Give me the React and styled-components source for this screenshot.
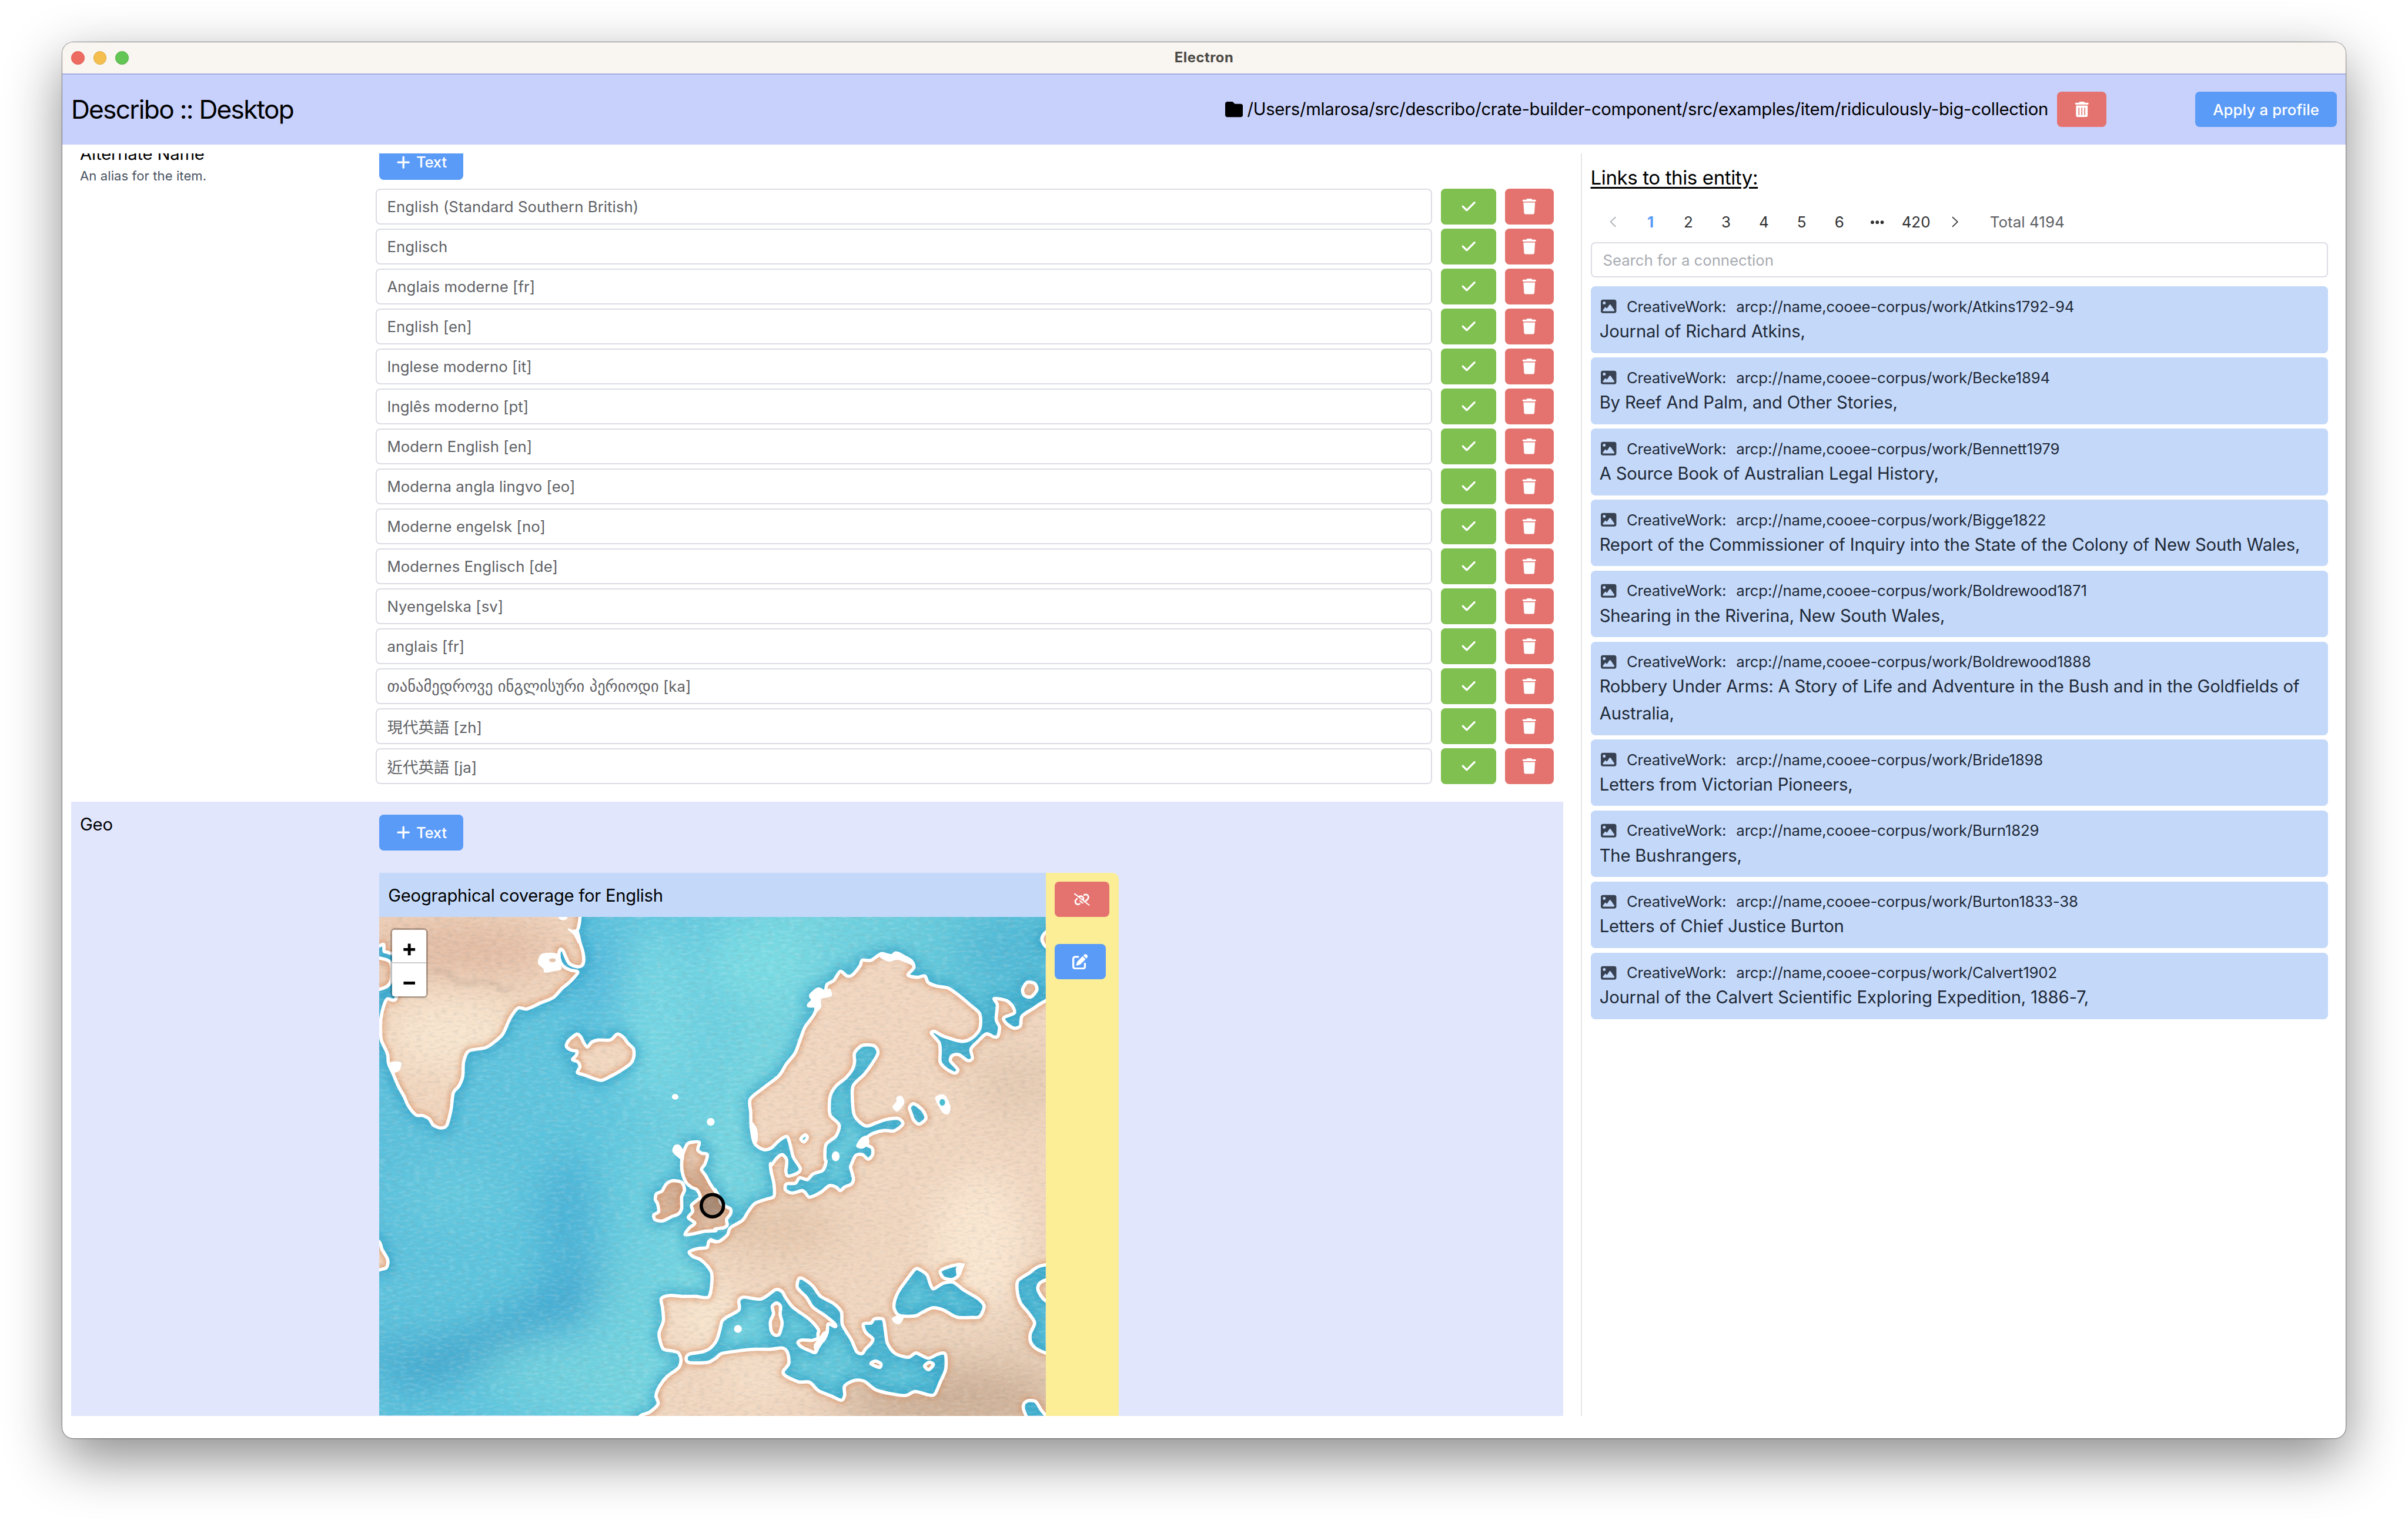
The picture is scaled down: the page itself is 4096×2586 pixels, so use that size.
import React from "react";
import styled, { createGlobalStyle, css } from "styled-components";
import {
  FaCheck,
  FaEllipsis,
  FaFolder,
  FaImage,
  FaLinkSlash,
  FaPenToSquare,
  FaPlus,
  FaTrash,
  FaTrashCan,
} from "react-icons/fa6";

const SCALE = 4096 / 2168;

const GlobalStyle = createGlobalStyle`
  *, *::before, *::after { box-sizing: border-box; }
  html, body { margin: 0; padding: 0; background: #fff; overflow: hidden; }
  svg { display: block; }
`;

const Desktop = styled.div`
  zoom: ${SCALE};
  width: 2168px;
  height: 1369px;
  padding: 38px 56px 74px;
  overflow: hidden;
  background: #fff;
  color: #000;
  font-family: Inter, "Noto Sans CJK SC", "DejaVu Sans", sans-serif;
  font-size: 15.5px;
`;

const Window = styled.div`
  display: flex;
  flex-direction: column;
  width: 2056px;
  height: 1257px;
  border-radius: 10px;
  overflow: hidden;
  background: #fff;
  box-shadow: 0 0 0 0.6px rgba(0, 0, 0, 0.35), 0 18px 50px rgba(0, 0, 0, 0.46);
`;

const TitleBar = styled.div`
  display: grid;
  grid-template-columns: 1fr auto 1fr;
  align-items: center;
  height: 28px;
  flex: none;
  padding: 0 8px;
  background: #f9f5f0;
`;

const Lights = styled.div`
  display: flex;
  gap: 8px;
`;

const Light = styled.span`
  width: 12px;
  height: 12px;
  border-radius: 50%;
  background: ${(p) => p.$fill};
  border: 1px solid ${(p) => p.$edge};
`;

const WindowTitle = styled.div`
  font-size: 12.6px;
  font-weight: 700;
  line-height: 16px;
  letter-spacing: 0.28px;
  color: #4b4a47;
`;

const Header = styled.header`
  display: flex;
  align-items: center;
  height: 64px;
  flex: none;
  padding: 0 8px;
  background: #c8d1fc;
  border-top: 1.1px solid #a3afe0;
`;

const Brand = styled.h1`
  margin: 0;
  flex: 1;
  font-size: 23.4px;
  font-weight: 400;
  line-height: 32px;
  letter-spacing: -0.91px;
`;

const PathText = styled.span`
  margin: 0 8px 0 4px;
  line-height: 24px;
  letter-spacing: -0.16px;
`;

const tones = { primary: "#5b9bf8", success: "#7fc050", danger: "#e4736f" };

const Button = styled.button`
  display: flex;
  align-items: center;
  justify-content: center;
  gap: 4.5px;
  flex: none;
  width: ${(p) => p.$w}px;
  height: 32px;
  padding: 0;
  border: 0;
  border-radius: 4px;
  background: ${(p) => tones[p.$tone]};
  color: #fff;
  font-family: inherit;
  font-size: 13.6px;
  font-weight: 500;
  letter-spacing: ${(p) => p.$track ?? 0}px;
`;

const ProfileSlot = styled.div`
  margin-left: 80px;
`;

const Body = styled.main`
  display: flex;
  flex: none;
  height: 1137px;
  margin: 8px 8px 0;
`;

const Editor = styled.div`
  width: 1343.5px;
  height: 100%;
  flex: none;
  overflow: hidden;
`;

const Scrolled = styled.div`
  margin-top: -20px;
`;

const Property = styled.section`
  display: flex;
  align-items: flex-start;
  padding: 0 8.5px ${(p) => (p.$tinted ? 0 : 16)}px 8px;
  background: ${(p) => (p.$tinted ? "#e1e6fd" : "#fff")};
`;

const Label = styled.div`
  width: 266px;
  flex: none;
  padding-top: 8.4px;
  line-height: 24px;
  letter-spacing: -0.13px;
`;

const Help = styled.div`
  font-size: 11.7px;
  line-height: 16px;
  letter-spacing: 0.04px;
  color: #4b5563;
`;

const Values = styled.div`
  flex: 1;
  min-width: 0;
  padding-top: 12px;
`;

const AddBar = styled.div`
  display: flex;
  padding-left: 3.5px;
`;

const ValueList = styled.div`
  display: flex;
  flex-direction: column;
  gap: 4px;
  margin-top: 8px;
`;

const ValueRow = styled.div`
  display: flex;
  gap: 8px;
`;

const fieldBox = css`
  display: flex;
  align-items: center;
  height: 32px;
  padding: 0 9.5px;
  border: 1.1px solid #dcdde5;
  border-radius: 4px;
  background: #fff;
  font-size: 13.65px;
  letter-spacing: 0.02px;
  white-space: pre;
`;

const Field = styled.div`
  ${fieldBox}
  flex: 1;
  color: #606266;
`;

const Georgian = styled.span`
  font-size: 14px;
  font-family: "DejaVu Sans", sans-serif;
  letter-spacing: 0.02px;
`;

const Han = styled.span`
  font-size: 14px;
  letter-spacing: 0;
  font-family: "Noto Sans CJK TC", sans-serif;
`;

const GeoCard = styled.div`
  display: flex;
  width: 665.5px;
  margin: 20px 0 0 3.5px;
  border-radius: 0 6px 0 0;
  overflow: hidden;
`;

const GeoMain = styled.div`
  width: 600px;
  flex: none;
`;

const GeoTitle = styled.div`
  height: 40px;
  padding: 0 8px;
  background: #c4d9fa;
  line-height: 40.8px;
  letter-spacing: -0.15px;
`;

const GeoActions = styled.div`
  display: flex;
  flex-direction: column;
  gap: 24px;
  flex: 1;
  padding: 8px;
  background: #fbee97;
`;

const MapFrame = styled.div`
  position: relative;
  width: 600px;
  height: 449px;
`;

const ZoomControl = styled.div`
  position: absolute;
  left: 10px;
  top: 10px;
  width: 34px;
  border: 2px solid rgba(0, 0, 0, 0.25);
  border-radius: 4px;
  background-clip: padding-box;
`;

const ZoomButton = styled.div`
  height: 30px;
  padding-top: 2px;
  background: #fff;
  border-bottom: ${(p) => (p.$first ? "1.1px solid #ccc" : "0")};
  border-radius: ${(p) => (p.$first ? "2px 2px 0 0" : "0 0 2px 2px")};
  color: #000;
  font-size: 21px;
  font-weight: 700;
  line-height: 29px;
  text-align: center;
`;

const Links = styled.aside`
  flex: 1;
  height: 100%;
  margin-left: 16px;
  padding: 8px 8px 0 7.5px;
  border-left: 1.1px solid #e5e7eb;
`;

const LinksTitle = styled.h2`
  margin: 0;
  font-size: 17.5px;
  font-weight: 400;
  line-height: 28px;
  letter-spacing: -0.21px;
  text-decoration: underline;
  text-decoration-thickness: 1.6px;
  text-underline-offset: 2px;
`;

const Pager = styled.div`
  display: flex;
  align-items: center;
  height: 32px;
  margin: 10px 0 2px;
  padding-left: 3px;
  font-size: 13.7px;
  color: #303133;
`;

const Page = styled.span`
  display: flex;
  align-items: center;
  justify-content: center;
  width: ${(p) => p.$w ?? 34}px;
  height: 32px;
  color: ${(p) => (p.$active ? "#5b9bf8" : p.$muted ? "#a8abb2" : "#303133")};
  font-weight: ${(p) => (p.$active ? 700 : 400)};
`;

const Total = styled.span`
  margin-left: 14.5px;
  color: #606266;
  letter-spacing: 0.04px;
`;

const Search = styled.div`
  ${fieldBox}
  padding-left: 10px;
  color: #a8abb2;
  letter-spacing: -0.02px;
`;

const Cards = styled.div`
  display: flex;
  flex-direction: column;
  gap: 4px;
  margin-top: 8px;
`;

const Card = styled.article`
  padding: 8px;
  border-radius: 4px;
  background: #c4d9fa;
  color: #1f2937;
`;

const CardMeta = styled.div`
  display: flex;
  align-items: center;
  gap: 9px;
  height: 20px;
  padding-left: 1.5px;
  font-size: 13.65px;
  letter-spacing: -0.08px;

  svg { color: #374151; }
`;

const CardTitle = styled.div`
  position: relative;
  top: 0.4px;
  line-height: 24px;
  letter-spacing: -0.105px;
`;

const names = [
  "English (Standard Southern British)",
  "Englisch",
  "Anglais moderne [fr]",
  "English [en]",
  "Inglese moderno [it]",
  "Inglês moderno [pt]",
  "Modern English [en]",
  "Moderna angla lingvo [eo]",
  "Moderne engelsk [no]",
  "Modernes Englisch [de]",
  "Nyengelska [sv]",
  "anglais [fr]",
  <><Georgian>თანამედროვე ინგლისური პერიოდი</Georgian>{" [ka]"}</>,
  <><Han>現代英語</Han>{" [zh]"}</>,
  <><Han>近代英語</Han>{" [ja]"}</>,
];

const works = [
  ["Atkins1792-94", "Journal of Richard Atkins,"],
  ["Becke1894", "By Reef And Palm, and Other Stories,"],
  ["Bennett1979", "A Source Book of Australian Legal History,"],
  ["Bigge1822", "Report of the Commissioner of Inquiry into the State of the Colony of New South Wales,"],
  ["Boldrewood1871", "Shearing in the Riverina, New South Wales,"],
  ["Boldrewood1888", "Robbery Under Arms: A Story of Life and Adventure in the Bush and in the Goldfields of Australia,"],
  ["Bride1898", "Letters from Victorian Pioneers,"],
  ["Burn1829", "The Bushrangers,"],
  ["Burton1833-38", "Letters of Chief Justice Burton"],
  ["Calvert1902", "Journal of the Calvert Scientific Exploring Expedition, 1886-7,"],
];

/* ---- Map: coastlines digitised on three sheets, brought into one 1200 x 898 frame ---- */

const sheet = (ox, oy, sx, sy) => (...flat) => {
  const out = [];
  for (let i = 0; i < flat.length; i += 2) out.push([flat[i] / sx + ox, flat[i + 1] / sy + oy]);
  return out;
};
const west = sheet(-3, -12, 2.529, 1.704);
const north = sheet(597, -12, 2.529, 3);
const south = sheet(597, 438, 2.529, 3);
const frame = sheet(0, 0, 1, 1);

const smooth = (pts) => {
  const n = pts.length;
  const f = (v) => v.toFixed(1);
  let d = `M${f(pts[0][0])} ${f(pts[0][1])}`;
  for (let i = 0; i < n; i++) {
    const [a, b, c, e] = [pts[(i - 1 + n) % n], pts[i], pts[(i + 1) % n], pts[(i + 2) % n]];
    d += `C${f(b[0] + (c[0] - a[0]) / 7)} ${f(b[1] + (c[1] - a[1]) / 7)} ${f(c[0] - (e[0] - b[0]) / 7)} ${f(c[1] - (e[1] - b[1]) / 7)} ${f(c[0])} ${f(c[1])}`;
  }
  return d + "Z";
};

const greenland = west(-60, -60, 925, -60, 922, 20, 916, 50, 908, 68, 920, 95, 936, 130, 938, 160, 925, 172, 900, 172, 872, 162, 855, 140, 845, 124, 832, 120, 826, 135, 832, 158, 850, 174, 880, 184, 912, 190, 880, 217, 840, 240, 800, 268, 740, 285, 680, 303, 640, 300, 605, 330, 570, 380, 530, 405, 490, 422, 415, 432, 392, 465, 388, 510, 370, 540, 345, 560, 335, 610, 315, 660, 290, 668, 255, 660, 235, 640, 205, 630, 175, 628, 140, 600, 120, 570, 95, 540, 70, 500, 50, 470, 45, 440, 18, 400, 14, 370, 16, 330, 30, 290, 45, 272, 85, 268, 90, 150, 50, 130, 30, 126, 28, 105, 5, 110, -40, 118);
const greenlandIsle = west(-40, 150, 30, 150, 62, 165, 62, 215, 30, 238, -40, 240);
const iceland = west(860, 418, 870, 400, 890, 388, 908, 380, 925, 388, 938, 405, 955, 420, 975, 405, 1005, 398, 1060, 398, 1092, 380, 1120, 390, 1140, 408, 1165, 425, 1167, 450, 1150, 472, 1100, 495, 1060, 510, 1020, 522, 980, 515, 940, 505, 910, 498, 922, 480, 912, 465, 888, 458, 905, 445, 908, 432, 885, 430);
const newfoundland = west(-40, 1000, 8, 1018, 20, 1040, 45, 1070, 45, 1090, 30, 1100, -40, 1100);
const ireland = west(1270, 870, 1295, 862, 1315, 840, 1345, 830, 1385, 835, 1398, 858, 1385, 880, 1385, 915, 1370, 932, 1340, 940, 1300, 953, 1265, 950, 1258, 935, 1280, 925, 1275, 900, 1265, 888);
const britain = [
  ...west(1410, 718, 1430, 712, 1465, 712, 1458, 735, 1475, 745, 1502, 750, 1490, 780, 1475, 795, 1495, 815, 1515, 840, 1545, 868),
  ...south(20, 160, 36, 195, 48, 235, 68, 250, 90, 264, 90, 290, 72, 320, 75, 350, 60, 365, 20, 372),
  ...west(1540, 983, 1490, 985, 1440, 993, 1400, 995, 1420, 975, 1445, 960, 1415, 943, 1435, 925, 1430, 905, 1455, 890, 1470, 880, 1455, 858, 1430, 850, 1405, 835, 1390, 810, 1385, 785, 1390, 750),
];
const mainland = [
  ...north(1640, 440, 1525, 490, 1470, 530, 1418, 572, 1410, 625, 1380, 637, 1345, 610, 1335, 580, 1382, 555, 1375, 520, 1350, 490, 1330, 482, 1290, 478, 1305, 510, 1300, 590, 1315, 630, 1308, 680, 1290, 685, 1255, 668, 1215, 710, 1185, 750, 1192, 800, 1170, 812, 1130, 780, 1100, 785, 1092, 815, 1125, 860, 1110, 880, 1070, 855, 1045, 820, 1045, 760, 1040, 715, 1005, 665, 1020, 655, 1060, 680, 1145, 708, 1190, 690, 1225, 640, 1225, 560, 1180, 510, 1130, 460, 1080, 420, 1030, 410, 990, 390, 975, 355, 940, 362, 898, 350, 925, 310, 915, 275, 880, 250, 845, 230, 825, 245, 800, 240, 775, 235, 730, 270, 690, 270, 680, 300, 645, 350, 620, 355, 590, 330, 560, 380, 530, 400, 520, 440, 490, 425, 455, 460, 465, 485, 445, 515, 480, 520, 470, 565, 430, 630, 410, 690, 385, 770, 345, 830, 310, 895, 240, 960, 180, 1020, 182, 1090, 185, 1180, 200, 1260, 240, 1293, 275, 1285, 310, 1245, 345, 1222, 358, 1250, 375, 1330),
  ...south(390, 10, 408, 45, 395, 70, 352, 86, 342, 60, 345, 30),
  ...north(345, 1345, 325, 1320, 300, 1340, 278, 1375),
  ...south(272, 20, 275, 60, 288, 130, 288, 195, 250, 212, 200, 235, 170, 280, 145, 325, 90, 365, 75, 405, 35, 440, 0, 430),
  ...west(1540, 1018, 1510, 1015, 1500, 1035, 1460, 1038, 1420, 1048, 1435, 1062, 1470, 1072, 1500, 1090, 1522, 1115, 1520, 1160, 1505, 1188, 1450, 1185, 1390, 1185, 1330, 1182, 1292, 1192, 1298, 1220, 1302, 1260, 1282, 1300, 1300, 1345, 1340, 1352, 1370, 1358, 1382, 1380, 1370, 1405, 1320, 1430, 1285, 1460, 1268, 1490, 1278, 1515, 1240, 1540, 1190, 1558, 1160, 1640),
  ...frame(900, 1000, 1300, 1000, 1300, 500),
];
const baltic = [
  ...north(690, 730, 745, 733, 762, 770, 740, 820, 700, 885, 650, 945, 645, 1010, 655, 1110, 705, 1165, 750, 1150, 800, 1130, 855, 1125, 875, 1155, 835, 1192, 790, 1190, 740, 1205, 712, 1228, 705, 1262, 735, 1285, 737, 1320, 717, 1345, 690, 1320, 660, 1325, 640, 1375),
  ...south(637, 40, 650, 100, 640, 130, 610, 145, 590, 165, 570, 145, 540, 138, 500, 175, 450, 200, 430, 175, 415, 165, 370, 178, 340, 160, 345, 128, 385, 125, 405, 95, 440, 105, 465, 75, 510, 55, 525, 10),
  ...north(520, 1340, 525, 1265, 570, 1220, 585, 1160, 545, 1110, 540, 1060, 545, 1000, 570, 950, 615, 905, 645, 860, 655, 820, 655, 770),
];
const mediterranean = [
  ...west(1568, 1262, 1560, 1285, 1545, 1318, 1517, 1343, 1480, 1355, 1420, 1362, 1405, 1375, 1420, 1388, 1500, 1388, 1540, 1375),
  ...south(50, 1045, 130, 1030, 200, 1022, 270, 1022, 325, 1015, 350, 1040, 355, 1100, 330, 1140, 340, 1165, 400, 1198, 450, 1200, 490, 1245, 550, 1275, 595, 1298, 610, 1270, 610, 1220, 655, 1190, 700, 1195, 760, 1245, 880, 1272, 930, 1250, 990, 1268, 1020, 1265, 1045, 1200, 1070, 1130, 1068, 1048, 1035, 1048, 990, 1070, 935, 1042, 900, 1065, 840, 1045, 805, 990, 795, 920, 785, 860, 745, 858, 730, 880, 695, 885, 705, 930, 738, 965, 730, 990, 705, 1020, 690, 1045, 665, 1035, 640, 970, 600, 890, 595, 820, 560, 775, 500, 735, 465, 680, 420, 640, 400, 642, 395, 690, 435, 740, 465, 795, 520, 840, 565, 885, 566, 900, 535, 885, 530, 930, 512, 975, 492, 980, 488, 940, 490, 915, 450, 860, 375, 795, 340, 740, 325, 710, 295, 700, 230, 750, 150, 740, 128, 760, 128, 810, 70, 850),
];
const blackSea = south(930, 590, 950, 590, 985, 620, 1000, 670, 1015, 695, 1060, 665, 1105, 660, 1150, 700, 1220, 750, 1245, 790, 1225, 845, 1190, 850, 1120, 848, 1060, 810, 1010, 798, 960, 825, 930, 842, 860, 840, 835, 800, 840, 750, 860, 700, 890, 650);
const azov = south(1045, 600, 1080, 578, 1140, 564, 1130, 620, 1100, 645, 1060, 635);
const caspian = south(1620, 555, 1500, 572, 1450, 610, 1400, 650, 1395, 700, 1410, 770, 1450, 830, 1475, 880, 1455, 940, 1460, 990, 1500, 1030, 1620, 1060, 1620, 820, 1525, 760, 1495, 715, 1490, 685, 1510, 655, 1620, 610);
const gulf = south(1425, 1320, 1445, 1300, 1480, 1305, 1505, 1350, 1560, 1440, 1470, 1440, 1428, 1360);
const ladoga = north(905, 1065, 925, 1045, 965, 1080, 980, 1125, 950, 1155, 925, 1135, 912, 1095);
const vanern = north(410, 1235, 430, 1213, 440, 1228, 425, 1252);
const sicily = south(397, 985, 415, 972, 460, 974, 490, 965, 492, 990, 478, 1038, 455, 1032, 412, 1008);
const sardinia = south(280, 790, 300, 772, 318, 790, 316, 835, 325, 880, 312, 940, 290, 944, 275, 920, 272, 870, 286, 830);
const crete = south(730, 1100, 750, 1086, 775, 1100, 768, 1120);
const cyprus = south(974, 1112, 995, 1092, 1014, 1105, 992, 1132);
const kolguyev = north(1420, 430, 1440, 390, 1475, 395, 1485, 430, 1460, 467, 1430, 462);
const novaya = north(1600, 100, 1530, 115, 1508, 155, 1530, 200, 1600, 220);

const LAND = [
  greenland, greenlandIsle, iceland, newfoundland, ireland, britain, mainland, baltic, mediterranean,
  blackSea, azov, caspian, gulf, ladoga, vanern, sicily, sardinia, crete, cyprus, kolguyev, novaya,
].map(smooth).join("");

const FOAM = [
  west(735, 150, 750, 135, 800, 132, 826, 140, 824, 160, 836, 180, 790, 187, 762, 190, 757, 178, 735, 165),
  west(868, 58, 890, 62, 912, 62, 925, 95, 915, 100, 895, 75),
  west(1345, 735, 1355, 722, 1375, 722, 1392, 740, 1392, 765, 1375, 760, 1350, 745),
  west(60, 468, 105, 468, 98, 490, 75, 496),
  north(1024, 1015, 1045, 998, 1068, 1005, 1089, 1060, 1083, 1096, 1062, 1096, 1041, 1060),
  north(830, 1062, 848, 1035, 848, 1012, 868, 1006, 879, 1040, 850, 1084),
  north(700, 1222, 680, 1240, 665, 1275, 690, 1285, 718, 1262, 716, 1225),
  north(455, 460, 490, 425, 515, 450, 540, 425, 548, 462, 500, 478, 502, 520, 480, 548, 470, 520, 445, 515, 465, 485),
  north(775, 235, 800, 245, 825, 245, 845, 230, 900, 262, 925, 300, 905, 288, 850, 265, 810, 275, 770, 250),
  north(186, 1150, 208, 1180, 212, 1240, 200, 1250),
  south(490, 970, 515, 930, 535, 930, 515, 975, 480, 1035, 472, 1000),
  south(828, 858, 850, 842, 876, 852, 860, 882, 840, 878),
  south(1120, 580, 1155, 560, 1140, 600, 1125, 630),
].map(smooth).join("");

const specks = [
  [533, 324, 6, 5], [597, 369, 7, 7], [822, 431, 7, 9], [646, 742, 7, 7], [331, 1, 8, 5],
];

function WatercolourMap() {
  return (
    <svg width="600" height="449" viewBox="0 0 1200 898">
      <defs>
        <linearGradient id="sea" x1="0" y1="0" x2="1" y2="0.25">
          <stop offset="0" stopColor="#5bbfdc" />
          <stop offset="0.4" stopColor="#5ec6df" />
          <stop offset="0.6" stopColor="#74d5e1" />
          <stop offset="1" stopColor="#55bfd8" />
        </linearGradient>
        <linearGradient id="soil" x1="0" y1="0" x2="1" y2="1">
          <stop offset="0" stopColor="#efcfb7" />
          <stop offset="0.3" stopColor="#f3d7bf" />
          <stop offset="0.7" stopColor="#f1d6bf" />
          <stop offset="1" stopColor="#dcc2aa" />
        </linearGradient>
        <filter id="wash" filterUnits="userSpaceOnUse" x="-200" y="-200" width="1600" height="1300">
          <feGaussianBlur stdDeviation="34" />
        </filter>
        <filter id="halo" filterUnits="userSpaceOnUse" x="-80" y="-80" width="1380" height="1080">
          <feGaussianBlur stdDeviation="9" />
        </filter>
        <filter id="rim" filterUnits="userSpaceOnUse" x="-80" y="-80" width="1380" height="1080">
          <feGaussianBlur stdDeviation="4.5" />
        </filter>
        <filter id="paperDark" filterUnits="userSpaceOnUse" x="0" y="0" width="1200" height="898">
          <feTurbulence type="fractalNoise" baseFrequency="0.09 0.22" numOctaves="4" seed="4" />
          <feColorMatrix values="0 0 0 0 0.25  0 0 0 0 0.3  0 0 0 0 0.3  1.3 0 0 0 -0.58" />
        </filter>
        <filter id="paperLight" filterUnits="userSpaceOnUse" x="0" y="0" width="1200" height="898">
          <feTurbulence type="fractalNoise" baseFrequency="0.08 0.2" numOctaves="4" seed="11" />
          <feColorMatrix values="0 0 0 0 1  0 0 0 0 1  0 0 0 0 1  1.3 0 0 0 -0.58" />
        </filter>
        <clipPath id="ashore">
          <path d={LAND} clipRule="evenodd" />
        </clipPath>
      </defs>

      <rect width="1200" height="898" fill="url(#sea)" />
      <g filter="url(#wash)">
        <ellipse cx="400" cy="110" rx="60" ry="90" fill="#3fa9dc" opacity="0.4" />
        <ellipse cx="220" cy="750" rx="230" ry="32" fill="#2f93c4" opacity="0.6" transform="rotate(-28 220 750)" />
        <ellipse cx="340" cy="590" rx="55" ry="170" fill="#369fd0" opacity="0.5" />
        <ellipse cx="60" cy="790" rx="140" ry="36" fill="#3a9ec8" opacity="0.45" />
        <ellipse cx="340" cy="820" rx="160" ry="55" fill="#74d3dd" opacity="0.75" />
        <ellipse cx="430" cy="690" rx="50" ry="60" fill="#70d2de" opacity="0.5" />
        <ellipse cx="500" cy="170" rx="70" ry="160" fill="#7cdce4" opacity="0.7" />
        <ellipse cx="680" cy="80" rx="90" ry="70" fill="#7edfe6" opacity="0.7" />
        <ellipse cx="130" cy="500" rx="90" ry="60" fill="#6bcfe0" opacity="0.5" />
        <ellipse cx="1130" cy="60" rx="90" ry="70" fill="#3fa5d0" opacity="0.35" />
      </g>
      <path d={LAND} fill="none" stroke="#1f93bf" strokeWidth="24" opacity="0.48" filter="url(#halo)" />

      <path d={LAND} fill="url(#soil)" fillRule="evenodd" />
      <g clipPath="url(#ashore)">
        <g filter="url(#wash)">
          <ellipse cx="150" cy="60" rx="170" ry="45" fill="#dcae95" opacity="0.7" />
          <ellipse cx="130" cy="210" rx="120" ry="70" fill="#f8e5cf" />
          <ellipse cx="1080" cy="590" rx="90" ry="130" fill="#fae6d0" />
          <ellipse cx="720" cy="560" rx="110" ry="50" fill="#e2c2a5" opacity="0.8" />
          <ellipse cx="590" cy="720" rx="60" ry="50" fill="#fae8d1" />
          <ellipse cx="680" cy="830" rx="60" ry="30" fill="#f8e3cd" />
          <ellipse cx="1020" cy="870" rx="190" ry="60" fill="#c4a58c" opacity="0.75" />
          <ellipse cx="1150" cy="300" rx="80" ry="60" fill="#dfc4ad" opacity="0.7" />
          <ellipse cx="580" cy="500" rx="60" ry="60" fill="#b07d5c" opacity="0.6" />
          <ellipse cx="520" cy="505" rx="30" ry="40" fill="#a8714f" opacity="0.6" />
        </g>
        <path d={LAND} fill="none" stroke="#d58a5b" strokeWidth="15" opacity="0.55" filter="url(#rim)" />
        <path
          d="M95 98 Q120 92 130 108 T170 118 T215 126 T240 122"
          fill="none" stroke="#8d7a66" strokeWidth="4" opacity="0.4" filter="url(#rim)"
        />
      </g>

      <rect width="1200" height="898" filter="url(#paperDark)" opacity="0.34" />
      <rect width="1200" height="898" filter="url(#paperLight)" opacity="0.3" />

      <path d={LAND} fill="none" stroke="#fff" strokeWidth="6" strokeLinejoin="round" />
      <path d={FOAM} fill="#fff" stroke="#fff" strokeWidth="2" strokeLinejoin="round" />
      {specks.map(([x, y, rx, ry]) => (
        <ellipse key={`${x}-${y}`} cx={x} cy={y} rx={rx} ry={ry} fill="#fff" />
      ))}
      <ellipse cx="312" cy="78" rx="6" ry="3.5" fill="#e3c3ab" />
      <ellipse cx="1014" cy="334" rx="5" ry="6" fill="#4bbdd0" />

      <circle cx="600" cy="520" r="20" fill="#000" fillOpacity="0.2" stroke="#000" strokeWidth="6" />
    </svg>
  );
}

function Chevron({ flip }) {
  return (
    <svg width="6" height="10" viewBox="0 0 6 10" fill="none" stroke="currentColor" strokeWidth="0.9" strokeLinecap="round" strokeLinejoin="round">
      <path d={flip ? "M0.8 0.8 L5.2 5 L0.8 9.2" : "M5.2 0.8 L0.8 5 L5.2 9.2"} />
    </svg>
  );
}

function AddText() {
  return (
    <AddBar>
      <Button $tone="primary" $w={75.5} $track={-0.1}>
        <FaPlus size={14} />
        Text
      </Button>
    </AddBar>
  );
}

export default function App() {
  return (
    <Desktop>
      <GlobalStyle />
      <Window>
        <TitleBar>
          <Lights>
            <Light $fill="#ed6b60" $edge="#dc5a50" />
            <Light $fill="#f5bf4f" $edge="#dba73f" />
            <Light $fill="#62c555" $edge="#52b043" />
          </Lights>
          <WindowTitle>Electron</WindowTitle>
        </TitleBar>
        <Header>
          <Brand>Describo :: Desktop</Brand>
          <FaFolder size={16} />
          <PathText>/Users/mlarosa/src/describo/crate-builder-component/src/examples/item/ridiculously-big-collection</PathText>
          <Button $tone="danger" $w={44.5}>
            <FaTrashCan size={14} />
          </Button>
          <ProfileSlot>
            <Button $tone="primary" $w={127.5} $track={0.09}>Apply a profile</Button>
          </ProfileSlot>
        </Header>
        <Body>
          <Editor>
            <Scrolled>
              <Property>
                <Label>
                  Alternate Name
                  <Help>An alias for the item.</Help>
                </Label>
                <Values>
                  <AddText />
                  <ValueList>
                    {names.map((name, i) => (
                      <ValueRow key={i}>
                        <Field>{typeof name === "string" ? name : <span>{name}</span>}</Field>
                        <Button $tone="success" $w={49.5}>
                          <FaCheck size={14} />
                        </Button>
                        <Button $tone="danger" $w={44}>
                          <FaTrash size={14} />
                        </Button>
                      </ValueRow>
                    ))}
                  </ValueList>
                </Values>
              </Property>
              <Property $tinted>
                <Label>Geo</Label>
                <Values>
                  <AddText />
                  <GeoCard>
                    <GeoMain>
                      <GeoTitle>Geographical coverage for English</GeoTitle>
                      <MapFrame>
                        <WatercolourMap />
                        <ZoomControl>
                          <ZoomButton $first>+</ZoomButton>
                          <ZoomButton>−</ZoomButton>
                        </ZoomControl>
                      </MapFrame>
                    </GeoMain>
                    <GeoActions>
                      <Button $tone="danger" $w={49.5}>
                        <FaLinkSlash size={14} />
                      </Button>
                      <Button $tone="primary" $w={46}>
                        <FaPenToSquare size={14} />
                      </Button>
                    </GeoActions>
                  </GeoCard>
                </Values>
              </Property>
            </Scrolled>
          </Editor>
          <Links>
            <LinksTitle>Links to this entity:</LinksTitle>
            <Pager>
              <Page $muted><Chevron /></Page>
              <Page $active>1</Page>
              {[2, 3, 4, 5, 6].map((n) => <Page key={n}>{n}</Page>)}
              <Page><FaEllipsis size={14} /></Page>
              <Page $w={36}>420</Page>
              <Page><Chevron flip /></Page>
              <Total>Total 4194</Total>
            </Pager>
            <Search>Search for a connection</Search>
            <Cards>
              {works.map(([id, title]) => (
                <Card key={id}>
                  <CardMeta>
                    <FaImage size={14} />
                    <span>CreativeWork:</span>
                    <span>arcp://name,cooee-corpus/work/{id}</span>
                  </CardMeta>
                  <CardTitle>{title}</CardTitle>
                </Card>
              ))}
            </Cards>
          </Links>
        </Body>
      </Window>
    </Desktop>
  );
}
